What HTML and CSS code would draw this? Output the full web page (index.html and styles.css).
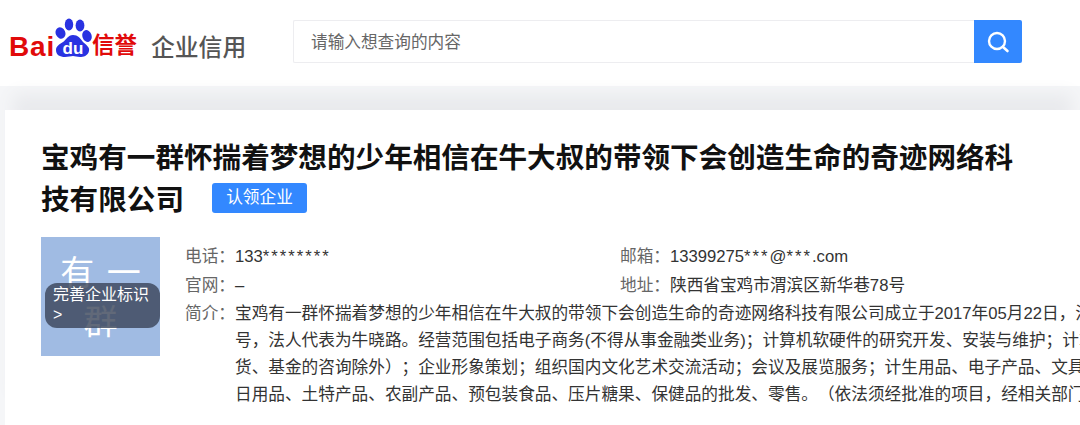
FILE: index.html
```html
<!DOCTYPE html>
<html lang="zh-CN">
<head>
    <meta charset="UTF-8">
    <meta name="viewport" content="width=device-width, initial-scale=1.0">
    <title>百度信誉 企业信用</title>
    <link rel="stylesheet" href="styles.css">
</head>
<body>
    <header class="top">
        <div class="logo">
            <span class="logo-bai">Bai</span>
            <svg class="logo-paw" width="37" height="40" viewBox="0 0 37 40">
                <ellipse cx="5.5" cy="15" rx="4.8" ry="5.8" fill="#2932e1" transform="rotate(-25 5.5 15)"/>
                <ellipse cx="14" cy="6.5" rx="4.2" ry="6" fill="#2932e1"/>
                <ellipse cx="25" cy="7.5" rx="4.4" ry="6" fill="#2932e1"/>
                <ellipse cx="32" cy="18" rx="4.6" ry="6" fill="#2932e1" transform="rotate(-18 32 18)"/>
                <path d="M18 17c5 0 7 3 10 7 3 3 7 5 6 9-1 5-6 6-9 6-3 0-5-1-7-1s-5 1-8 1c-5 0-9-2-9-7 0-4 4-6 7-8 3-2 5-7 10-7z" fill="#2932e1"/>
                <text class="logo-du" x="18" y="36" text-anchor="middle">du</text>
            </svg>
            <span class="logo-xy">信誉</span>
        </div>
        <div class="site-name">企业信用</div>
        <form class="search">
            <input class="search-input" type="text" placeholder="请输入想查询的内容">
            <button class="search-btn" type="button">
                <svg width="24" height="24" viewBox="0 0 24 24" fill="none" stroke="#fff" stroke-linecap="round">
                    <circle cx="11" cy="11" r="8" stroke-width="2.4"/>
                    <path d="M17 17l4.5 4" stroke-width="2.6"/>
                </svg>
            </button>
        </form>
    </header>

    <main class="card">
        <h1 class="company">宝鸡有一群怀揣着梦想的少年相信在牛大叔的带领下会创造生命的奇迹网络科技有限公司<a class="claim">认领企业</a></h1>

        <div class="detail">
            <div class="avatar">
                <div class="avatar-name">有 一 群</div>
                <div class="avatar-tip">完善企业标识 &gt;</div>
            </div>
            <div class="info">
                <div class="info-grid">
                    <div class="row"><span class="label">电话：</span><span>133<span class="mask">********</span></span></div>
                    <div class="row"><span class="label">邮箱：</span><span>13399275<span class="mask">***</span>@<span class="mask">***</span>.com</span></div>
                    <div class="row"><span class="label">官网：</span><span>–</span></div>
                    <div class="row"><span class="label">地址：</span><span>陕西省宝鸡市渭滨区新华巷78号</span></div>
                </div>
                <div class="intro">
                    <span class="label">简介：</span>
                    <div class="intro-text">
                        <div>宝鸡有一群怀揣着梦想的少年相信在牛大叔的带领下会创造生命的奇迹网络科技有限公司成立于2017年05月22日，注册资本</div>
                        <div>号，法人代表为牛晓路。经营范围包括电子商务(不得从事金融类业务)；计算机软硬件的研究开发、安装与维护；计算机</div>
                        <div>货、基金的咨询除外）；企业形象策划；组织国内文化艺术交流活动；会议及展览服务；计生用品、电子产品、文具用品</div>
                        <div>日用品、土特产品、农副产品、预包装食品、压片糖果、保健品的批发、零售。（依法须经批准的项目，经相关部门批准</div>
                    </div>
                </div>
            </div>
        </div>
    </main>
</body>
</html>
```

FILE: styles.css
```css
html, body {
    margin: 0;
    height: 425px;
    overflow: hidden;
}
body {
    background: #f5f6f8;
    font-family: "Liberation Sans", "Noto Sans CJK SC", sans-serif;
    color: #333;
    text-spacing-trim: space-all;
}
.top {
    display: flex;
    align-items: flex-start;
    height: 86px;
    background: #fff;
}
.logo {
    display: flex;
    align-items: flex-end;
    width: 127px;
    height: 58px;
    margin-left: 9px;
    color: #e10a0a;
    white-space: nowrap;
}
.logo-bai {
    font-size: 28px;
    font-weight: bold;
    line-height: 26px;
    height: 24px;
    letter-spacing: 0.8px;
}
.logo-paw {
    flex: none;
}
.logo-du {
    font-family: "Liberation Sans", sans-serif;
    font-size: 17px;
    font-weight: bold;
    fill: #fff;
}
.logo-xy {
    font-size: 22.5px;
    font-weight: bold;
    line-height: 26px;
    height: 25px;
}
.site-name {
    margin: 33px 0 0 15px;
    width: 142px;
    font-size: 23.8px;
    font-weight: 500;
    line-height: 30px;
    color: #555;
}
.search {
    display: flex;
    width: 729px;
    height: 43px;
    margin-top: 20px;
}
.search-input {
    flex: 1;
    min-width: 0;
    box-sizing: border-box;
    padding: 2px 17px 0;
    border: 1px solid #ededf0;
    border-right: 0;
    border-radius: 2px 0 0 2px;
    outline: 0;
    font: 16.66px "Liberation Sans", "Noto Sans CJK SC", sans-serif;
}
.search-input::placeholder {
    color: #666;
}
.search-btn {
    display: flex;
    align-items: center;
    justify-content: center;
    width: 48px;
    padding: 0;
    border: 0;
    border-radius: 0 2px 2px 0;
    background: #3388ff;
}
.card {
    margin: 24px 0 0 5px;
    padding: 27px 0 0 36px;
    height: 288px;
    background: #fff;
    box-shadow: 0 -24px 16px -8px #e9eaed;
    overflow: hidden;
}
.company {
    width: 985px;
    margin: 0 0 16px;
    font-size: 28.6px;
    font-weight: 600;
    line-height: 42px;
    color: #111;
}
.claim {
    display: inline-block;
    width: 95px;
    height: 30px;
    margin-left: 28px;
    border-radius: 3px;
    background: #3388ff;
    color: #fff;
    font-size: 16.66px;
    font-weight: normal;
    line-height: 30px;
    text-align: center;
    vertical-align: 7px;
}
.detail {
    display: flex;
    gap: 25px;
}
.avatar {
    position: relative;
    flex: none;
    width: 119px;
    height: 119px;
    background: #a0bbe3;
    color: #fff;
}
.avatar-name {
    padding: 12px 8px 0;
    font-size: 34px;
    line-height: 49px;
    word-spacing: 3px;
    text-align: center;
}
.avatar-tip {
    position: absolute;
    left: 4px;
    top: 46px;
    box-sizing: border-box;
    width: 115px;
    height: 45px;
    padding: 2px 8px;
    border-radius: 12px;
    background: rgba(58, 68, 88, 0.8);
    font-size: 16px;
    line-height: 20px;
}
.info {
    flex: none;
    padding-top: 5px;
    font-size: 16.66px;
    white-space: nowrap;
}
.info-grid {
    display: grid;
    grid-template-columns: 435px auto;
}
.row {
    display: flex;
    height: 29px;
    line-height: 29px;
}
.mask {
    letter-spacing: 2px;
}
.label {
    flex: none;
    width: 50px;
    color: #666;
}
.intro {
    display: flex;
    line-height: 27px;
}
```
